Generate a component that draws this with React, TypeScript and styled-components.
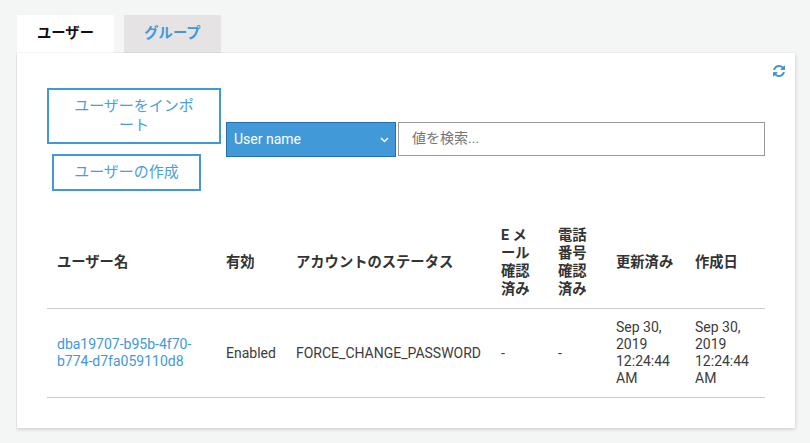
import React from "react";
import styled, { createGlobalStyle } from "styled-components";

const GlobalStyle = createGlobalStyle`
  * { box-sizing: border-box; }
  body {
    margin: 0;
    background: #f4f6f6;
    color: #3c3c3c;
    font: 14px/17px Roboto, "Noto Sans CJK JP", sans-serif;
  }
`;

const Page = styled.main`
  height: 443px;
  padding: 15px 15px 0 17px;
  overflow: hidden;
`;

const Tabs = styled.nav`
  display: flex;
  gap: 10px;
`;

const Tab = styled.a<{ $active?: boolean }>`
  width: 97px;
  height: 38px;
  line-height: 37px;
  text-align: center;
  font-size: 14.3px;
  font-weight: 700;
  color: ${(p) => (p.$active ? "#111" : "#4199d8")};
  background: ${(p) => (p.$active ? "#fff" : "#e5e3e4")};
`;

const Panel = styled.section`
  position: relative;
  height: 375px;
  padding: 35px 30px 0;
  background: #fff;
  box-shadow: 0 1px 4px rgba(0, 0, 0, 0.2);
  clip-path: inset(-1px -5px -6px -1px);
`;

const Refresh = styled.svg`
  position: absolute;
  top: 12px;
  right: 10px;
  width: 12px;
  height: 12px;
  fill: #4096d8;
`;

const Toolbar = styled.div`
  display: flex;
  align-items: center;
  height: 103px;
`;

const Actions = styled.div`
  display: flex;
  flex-direction: column;
  gap: 10px;
  width: 179px;
`;

const ActionButton = styled.button<{ $wide?: boolean }>`
  width: ${(p) => (p.$wide ? 174 : 149)}px;
  height: ${(p) => (p.$wide ? 56 : 37)}px;
  margin-left: ${(p) => (p.$wide ? 0 : 5)}px;
  padding: 0 20px;
  border: 2px solid #4199d8;
  background: #fff;
  color: #4a9edb;
  font: 15px/19px Roboto, "Noto Sans CJK JP", sans-serif;
  white-space: nowrap;
`;

const Select = styled.div`
  display: flex;
  align-items: center;
  justify-content: space-between;
  width: 170px;
  height: 35px;
  margin-right: 2px;
  padding: 0 6px 0 7px;
  border: 1px solid #286fad;
  background: #4199d8;
  color: #fff;
`;

const Chevron = styled.svg`
  width: 9px;
  height: 6px;
  fill: none;
  stroke: #fff;
  stroke-width: 1.5;
`;

const Search = styled.input`
  flex: 1;
  min-width: 0;
  height: 34px;
  margin-bottom: 2px;
  padding: 0 13px 2px;
  border: 1px solid #999;
  border-radius: 0;
  background: #fff;
  font: 14px/17px Roboto, "Noto Sans CJK JP", sans-serif;
  &::placeholder { color: #757575; }
`;

const Row = styled.div<{ $head?: boolean }>`
  display: grid;
  grid-template-columns: 169px 70px 205px 57px 58px 79px 80px;
  align-items: center;
  height: ${(p) => (p.$head ? 92 : 89)}px;
  border-bottom: 1px solid #ccc;
  white-space: pre;
  ${(p) =>
    p.$head &&
    "padding-bottom: 2px; color: #333; font-size: 14.3px; line-height: 18px; font-weight: 700;"}
`;

const Table = styled.div`
  width: 718px;
  margin-top: 26px;
`;

const Cell = styled.div`
  padding-left: 10px;
`;

const UserLink = styled.a`
  color: #4199d8;
`;

const headings = [
  "ユーザー名",
  "有効",
  "アカウントのステータス",
  "E メ\nール\n確認\n済み",
  "電話\n番号\n確認\n済み",
  "更新済み",
  "作成日",
];
const timestamp = "Sep 30,\n2019\n12:24:44\nAM";
const values = ["Enabled", "FORCE_CHANGE_PASSWORD", "-", "-", timestamp, timestamp];

export default function App() {
  return (
    <Page>
      <GlobalStyle />
      <Tabs>
        <Tab $active>ユーザー</Tab>
        <Tab>グループ</Tab>
      </Tabs>
      <Panel>
        <Refresh viewBox="0 0 1536 1536">
          <path d="M1511 928q0 5-1 7-64 268-268 434.5T764 1536q-146 0-282.5-55T238 1324l-129 129q-19 19-45 19t-45-19-19-45V960q0-26 19-45t45-19h448q26 0 45 19t19 45-19 45l-137 137q71 66 161 102t187 36q134 0 250-65t186-179q11-17 53-117 8-23 30-23h192q13 0 22.5 9.5t9.5 22.5zm25-800v448q0 26-19 45t-45 19h-448q-26 0-45-19t-19-45 19-45l138-138Q969 256 768 256q-134 0-250 65T332 500q-11 17-53 117-8 23-30 23H50q-13 0-22.5-9.5T18 608v-7q65-268 270-434.5T768 0q146 0 284 55.5T1297 212l130-129q19-19 45-19t45 19 19 45z" />
        </Refresh>
        <Toolbar>
          <Actions>
            <ActionButton $wide>
              ユーザーをインポ
              <br />
              ート
            </ActionButton>
            <ActionButton>ユーザーの作成</ActionButton>
          </Actions>
          <Select>
            User name
            <Chevron viewBox="0 0 9 6">
              <path d="M1 1l3.5 3.5L8 1" />
            </Chevron>
          </Select>
          <Search placeholder="値を検索..." />
        </Toolbar>
        <Table>
          <Row $head>
            {headings.map((heading) => (
              <Cell key={heading}>{heading}</Cell>
            ))}
          </Row>
          <Row>
            <Cell>
              <UserLink>{"dba19707-b95b-4f70-\nb774-d7fa059110d8"}</UserLink>
            </Cell>
            {values.map((value, i) => (
              <Cell key={i}>{value}</Cell>
            ))}
          </Row>
        </Table>
      </Panel>
    </Page>
  );
}
